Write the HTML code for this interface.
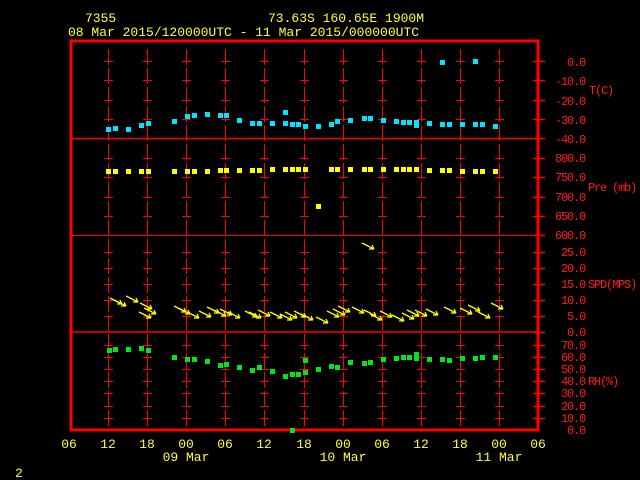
<!DOCTYPE html>
<html><head><meta charset="utf-8"><style>
html,body{margin:0;padding:0;background:#000;width:640px;height:480px;overflow:hidden}
svg{display:block}
text{font-family:"Liberation Mono",monospace;font-size:13px}
.y{fill:#ffff33}.r{fill:#ff1a1a}
.r text{font-size:12px;letter-spacing:-1.2px}
</style></head><body>
<svg width="640" height="480" viewBox="0 0 640 480">
<defs>
<g id="ar"><path d="M-12,-6 L0,0 M0,0 L-5,0 M0,0 L-2,-4" stroke="#ffff00" stroke-width="1.3" fill="none"/></g>
</defs>
<text x="85" y="22" class="y">7355</text>
<text x="268" y="22" class="y">73.63S  160.65E  1900M</text>
<text x="68" y="36" class="y">08 Mar 2015/120000UTC - 11 Mar 2015/000000UTC</text>

<g stroke="#f00" fill="none">
<rect x="71" y="41" width="467" height="389" stroke-width="3"/>
<line x1="71" y1="138.5" x2="538" y2="138.5" stroke-width="1.5"/>
<line x1="71" y1="235.5" x2="538" y2="235.5" stroke-width="1"/>
<line x1="71" y1="332" x2="538" y2="332" stroke-width="1.5"/>
<g stroke-width="1" stroke-dasharray="16,3">
<path d="M108.5,49V426M147.5,49V426M186.5,49V426M225.5,49V426M264.5,49V426M304.5,49V426M343.5,49V426M382.5,49V426M421.5,49V426M460.5,49V426M499.5,49V426"/>
</g>
</g>
<g stroke="#f00" stroke-width="1">
<path id="tk" d="M104,61.5h9M104,80.5h9M104,100.5h9M104,119.5h9M104,158.5h9M104,177.5h9M104,197.5h9M104,216.5h9M104,252.5h9M104,268.5h9M104,284.5h9M104,300.5h9M104,316.5h9M104,345.5h9M104,357.5h9M104,369.5h9M104,381.5h9M104,393.5h9M104,406.5h9M104,418.5h9"/>
<use href="#tk" x="39"/><use href="#tk" x="78"/><use href="#tk" x="117"/><use href="#tk" x="156"/><use href="#tk" x="196"/><use href="#tk" x="235"/><use href="#tk" x="274"/><use href="#tk" x="313"/><use href="#tk" x="352"/><use href="#tk" x="391"/>
<path d="M533,61.5h12M533,80.5h12M533,100.5h12M533,119.5h12M533,138.5h12M533,158.5h12M533,177.5h12M533,197.5h12M533,216.5h12M533,235.5h12M533,252.5h12M533,268.5h12M533,284.5h12M533,300.5h12M533,316.5h12M533,332.5h12M533,345.5h12M533,357.5h12M533,369.5h12M533,381.5h12M533,393.5h12M533,406.5h12M533,418.5h12" stroke-width="1.5"/>
</g>
<g class="r" text-anchor="end">
<text x="585" y="66">0.0</text><text x="585" y="85">-10.0</text><text x="585" y="105">-20.0</text><text x="585" y="124">-30.0</text><text x="585" y="143">-40.0</text>
<text x="585" y="162">800.0</text><text x="585" y="181">750.0</text><text x="585" y="201">700.0</text><text x="585" y="220">650.0</text><text x="585" y="239">600.0</text>
<text x="585" y="256">25.0</text><text x="585" y="272">20.0</text><text x="585" y="288">15.0</text><text x="585" y="304">10.0</text><text x="585" y="320">5.0</text><text x="585" y="336">0.0</text>
<text x="585" y="349">70.0</text><text x="585" y="361">60.0</text><text x="585" y="373">50.0</text><text x="585" y="385">40.0</text><text x="585" y="397">30.0</text><text x="585" y="410">20.0</text><text x="585" y="422">10.0</text><text x="585" y="434">0.0</text>
</g>
<g class="r">
<text x="589" y="94">T(C)</text><text x="588" y="191">Pre (mb)</text><text x="588" y="288">SPD(MPS)</text><text x="588" y="385">RH(%)</text>
</g>
<g class="y" text-anchor="middle">
<text x="69" y="448">06</text><text x="108" y="448">12</text><text x="147" y="448">18</text><text x="186" y="448">00</text><text x="225" y="448">06</text><text x="264" y="448">12</text><text x="304" y="448">18</text><text x="343" y="448">00</text><text x="382" y="448">06</text><text x="421" y="448">12</text><text x="460" y="448">18</text><text x="499" y="448">00</text><text x="538" y="448">06</text>
<text x="186" y="461">09 Mar</text><text x="343" y="461">10 Mar</text><text x="499" y="461">11 Mar</text>
</g>
<text x="15" y="477" class="y">2</text>

<g fill="#00e5ff">
<rect x="106" y="127" width="5" height="5"/><rect x="113" y="126" width="5" height="5"/><rect x="126" y="127" width="5" height="5"/><rect x="139" y="123" width="5" height="5"/><rect x="146" y="121" width="5" height="5"/><rect x="172" y="119" width="5" height="5"/><rect x="185" y="114" width="5" height="5"/><rect x="192" y="113" width="5" height="5"/><rect x="205" y="112" width="5" height="5"/><rect x="218" y="113" width="5" height="5"/><rect x="224" y="113" width="5" height="5"/><rect x="237" y="118" width="5" height="5"/><rect x="250" y="121" width="5" height="5"/><rect x="257" y="121" width="5" height="5"/><rect x="270" y="121" width="5" height="5"/><rect x="283" y="110" width="5" height="5"/><rect x="283" y="121" width="5" height="5"/><rect x="290" y="122" width="5" height="5"/><rect x="296" y="122" width="5" height="5"/><rect x="303" y="124" width="5" height="5"/><rect x="316" y="124" width="5" height="5"/><rect x="329" y="122" width="5" height="5"/><rect x="335" y="119" width="5" height="5"/><rect x="348" y="118" width="5" height="5"/><rect x="362" y="116" width="5" height="5"/><rect x="368" y="116" width="5" height="5"/><rect x="381" y="118" width="5" height="5"/><rect x="394" y="119" width="5" height="5"/><rect x="401" y="120" width="5" height="5"/><rect x="407" y="120" width="5" height="5"/><rect x="414" y="120" width="5" height="5"/><rect x="414" y="123" width="5" height="5"/><rect x="427" y="121" width="5" height="5"/><rect x="440" y="122" width="5" height="5"/><rect x="447" y="122" width="5" height="5"/><rect x="460" y="122" width="5" height="5"/><rect x="473" y="122" width="5" height="5"/><rect x="480" y="122" width="5" height="5"/><rect x="493" y="124" width="5" height="5"/><rect x="440" y="60" width="5" height="5"/><rect x="473" y="59" width="5" height="5"/>
</g>
<g fill="#ffff00">
<rect x="106" y="169" width="5" height="5"/><rect x="113" y="169" width="5" height="5"/><rect x="126" y="169" width="5" height="5"/><rect x="139" y="169" width="5" height="5"/><rect x="146" y="169" width="5" height="5"/><rect x="172" y="169" width="5" height="5"/><rect x="185" y="169" width="5" height="5"/><rect x="192" y="169" width="5" height="5"/><rect x="205" y="169" width="5" height="5"/><rect x="218" y="168" width="5" height="5"/><rect x="224" y="168" width="5" height="5"/><rect x="237" y="168" width="5" height="5"/><rect x="250" y="168" width="5" height="5"/><rect x="257" y="168" width="5" height="5"/><rect x="270" y="167" width="5" height="5"/><rect x="283" y="167" width="5" height="5"/><rect x="290" y="167" width="5" height="5"/><rect x="296" y="167" width="5" height="5"/><rect x="303" y="167" width="5" height="5"/><rect x="316" y="204" width="5" height="5"/><rect x="329" y="167" width="5" height="5"/><rect x="335" y="167" width="5" height="5"/><rect x="348" y="167" width="5" height="5"/><rect x="362" y="167" width="5" height="5"/><rect x="368" y="167" width="5" height="5"/><rect x="381" y="167" width="5" height="5"/><rect x="394" y="167" width="5" height="5"/><rect x="401" y="167" width="5" height="5"/><rect x="407" y="167" width="5" height="5"/><rect x="414" y="167" width="5" height="5"/><rect x="427" y="168" width="5" height="5"/><rect x="440" y="168" width="5" height="5"/><rect x="447" y="168" width="5" height="5"/><rect x="460" y="169" width="5" height="5"/><rect x="473" y="169" width="5" height="5"/><rect x="480" y="169" width="5" height="5"/><rect x="493" y="169" width="5" height="5"/>
</g>
<g fill="#00e61a">
<rect x="107" y="348" width="5" height="5"/><rect x="113" y="347" width="5" height="5"/><rect x="126" y="347" width="5" height="5"/><rect x="139" y="346" width="5" height="5"/><rect x="146" y="348" width="5" height="5"/><rect x="172" y="355" width="5" height="5"/><rect x="185" y="357" width="5" height="5"/><rect x="192" y="357" width="5" height="5"/><rect x="205" y="359" width="5" height="5"/><rect x="218" y="363" width="5" height="5"/><rect x="224" y="362" width="5" height="5"/><rect x="237" y="365" width="5" height="5"/><rect x="250" y="368" width="5" height="5"/><rect x="257" y="365" width="5" height="5"/><rect x="270" y="369" width="5" height="5"/><rect x="283" y="374" width="5" height="5"/><rect x="290" y="372" width="5" height="5"/><rect x="296" y="372" width="5" height="5"/><rect x="303" y="370" width="5" height="5"/><rect x="303" y="358" width="5" height="5"/><rect x="316" y="367" width="5" height="5"/><rect x="329" y="364" width="5" height="5"/><rect x="335" y="365" width="5" height="5"/><rect x="348" y="360" width="5" height="5"/><rect x="362" y="361" width="5" height="5"/><rect x="368" y="360" width="5" height="5"/><rect x="381" y="357" width="5" height="5"/><rect x="394" y="356" width="5" height="5"/><rect x="401" y="355" width="5" height="5"/><rect x="407" y="355" width="5" height="5"/><rect x="414" y="352" width="5" height="5"/><rect x="414" y="356" width="5" height="5"/><rect x="427" y="357" width="5" height="5"/><rect x="440" y="357" width="5" height="5"/><rect x="447" y="358" width="5" height="5"/><rect x="460" y="356" width="5" height="5"/><rect x="473" y="356" width="5" height="5"/><rect x="480" y="355" width="5" height="5"/><rect x="493" y="355" width="5" height="5"/><rect x="290" y="428" width="5" height="5"/>
</g>
<g>
<use href="#ar" x="122" y="304"/><use href="#ar" x="126" y="306"/><use href="#ar" x="138" y="302"/><use href="#ar" x="152" y="309"/><use href="#ar" x="156" y="314"/><use href="#ar" x="151" y="318"/><use href="#ar" x="186" y="312"/><use href="#ar" x="190" y="314"/><use href="#ar" x="199" y="318"/><use href="#ar" x="211" y="317"/><use href="#ar" x="219" y="313"/><use href="#ar" x="226" y="316"/><use href="#ar" x="232" y="315"/><use href="#ar" x="240" y="318"/><use href="#ar" x="257" y="317"/><use href="#ar" x="261" y="318"/><use href="#ar" x="270" y="316"/><use href="#ar" x="282" y="318"/><use href="#ar" x="292" y="320"/><use href="#ar" x="297" y="318"/><use href="#ar" x="306" y="317"/><use href="#ar" x="313" y="320"/><use href="#ar" x="328" y="323"/><use href="#ar" x="339" y="317"/><use href="#ar" x="345" y="315"/><use href="#ar" x="350" y="312"/><use href="#ar" x="364" y="313"/><use href="#ar" x="376" y="316"/><use href="#ar" x="382" y="320"/><use href="#ar" x="392" y="317"/><use href="#ar" x="404" y="321"/><use href="#ar" x="414" y="319"/><use href="#ar" x="419" y="316"/><use href="#ar" x="427" y="316"/><use href="#ar" x="438" y="315"/><use href="#ar" x="456" y="313"/><use href="#ar" x="472" y="314"/><use href="#ar" x="480" y="311"/><use href="#ar" x="490" y="318"/><use href="#ar" x="503" y="309"/><use href="#ar" x="374" y="249"/>
</g>
</svg>
</body></html>
